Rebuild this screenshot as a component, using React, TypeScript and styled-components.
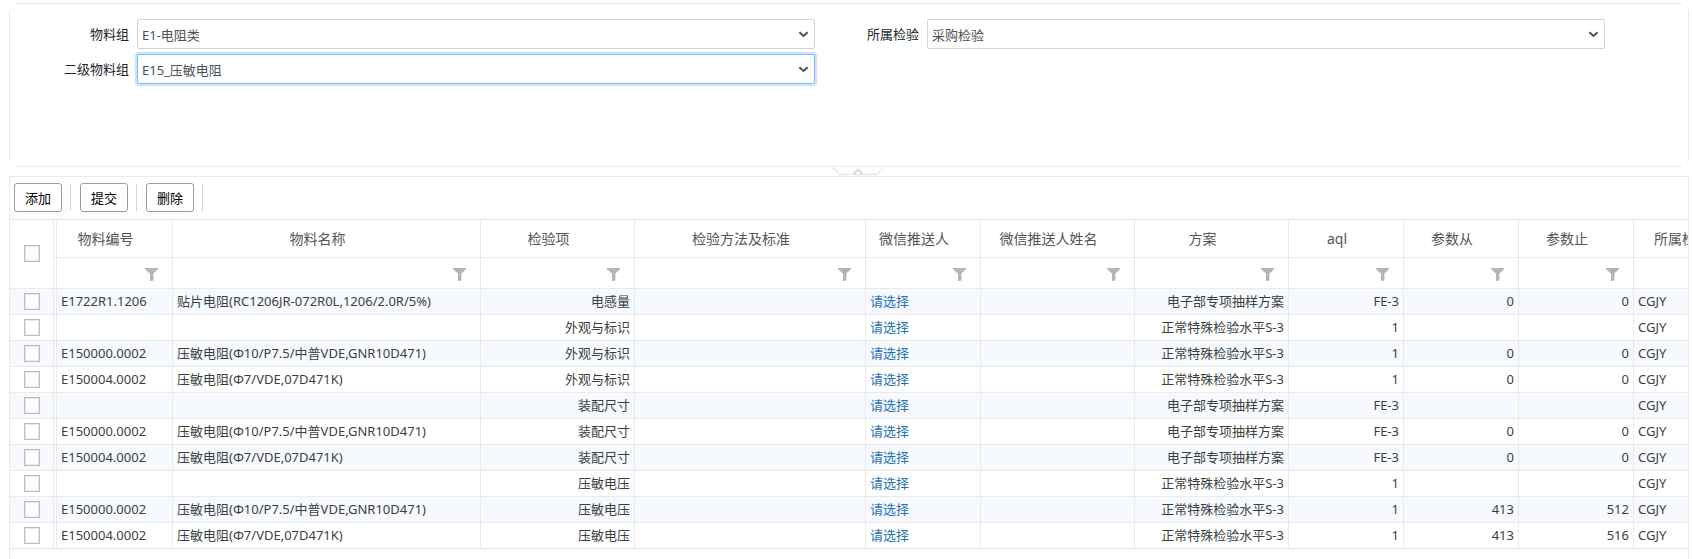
import React, { useState } from "react";
import styled, { createGlobalStyle, css } from "styled-components";

const line = "#ece9ec";

const GlobalStyle = createGlobalStyle`
  *, *::before, *::after { box-sizing: border-box; }
  body {
    margin: 0;
    background: #fff;
    color: #212529;
    font: 13px/20px "Noto Sans", "Noto Sans CJK SC", sans-serif;
  }
`;

const Page = styled.main`
  display: flex;
  flex-direction: column;
  min-height: 100vh;
  padding: 3px 5px 0 9px;
`;

/* Panel outline whose four sides stop short of the corners. */
const FilterPanel = styled.form`
  display: grid;
  grid-template-columns: 1fr 1fr;
  align-content: start;
  row-gap: 5px;
  min-height: 164px;
  padding: 16px 5% 16px 16px;
  background:
    linear-gradient(${line}, ${line}) center top / calc(100% - 14px) 1px no-repeat,
    linear-gradient(${line}, ${line}) center bottom / calc(100% - 14px) 1px no-repeat,
    linear-gradient(${line}, ${line}) left center / 1px calc(100% - 14px) no-repeat,
    linear-gradient(${line}, ${line}) right center / 1px calc(100% - 14px) no-repeat;
`;

const Field = styled.div<{ $newRow?: boolean }>`
  display: flex;
  align-items: center;
  ${(p) => p.$newRow && css`grid-column: 1;`}
`;

const FieldLabel = styled.label`
  width: 112px;
  padding-right: 8px;
  text-align: right;
`;

const SelectBox = styled.div`
  position: relative;
  flex: 1;
  min-width: 0;

  svg {
    position: absolute;
    top: 12px;
    right: 6px;
    pointer-events: none;
  }
`;

const Select = styled.select<{ $active?: boolean }>`
  display: block;
  width: 100%;
  height: 30px;
  padding: 2px 20px 0 4px;
  appearance: none;
  border: 1px solid ${(p) => (p.$active ? "#80bdff" : "#ced4da")};
  border-radius: 2px;
  outline: none;
  background: #fff;
  box-shadow: ${(p) => (p.$active ? "0 0 0 2px #cce5ff" : "none")};
  color: #495057;
  font: inherit;
`;

const Splitter = styled.div`
  display: flex;
  justify-content: center;
  height: 9px;
  padding-left: 18px;
`;

const CollapseButton = styled.button`
  display: block;
  height: 9px;
  padding: 0;
  border: 0;
  background: none;

  svg { display: block; }
`;

const GridPanel = styled.section`
  flex: 1;
  overflow: hidden;
  border: 1px solid ${line};
  border-bottom: 0;
`;

const Toolbar = styled.div`
  display: flex;
  align-items: center;
  gap: 8px;
  padding: 6px 4px 7px;
  border-bottom: 1px solid ${line};
`;

const ToolButton = styled.button`
  height: 29px;
  width: 48px;
  padding: 0;
  border: 1px solid #9c9c9c;
  border-radius: 3px;
  background: #fff;
  color: #000;
  font: inherit;
`;

const Separator = styled.span`
  width: 1px;
  height: 27px;
  margin-right: 1px;
  background: #cdd8d6;
`;

const Table = styled.table`
  width: max-content;
  table-layout: fixed;
  border-collapse: separate;
  border-spacing: 0;
  color: #3c3f42;
`;

const HeadCell = styled.th`
  height: 38px;
  padding: 0 18px 0 0;
  border-right: 1px solid ${line};
  border-bottom: 1px solid ${line};
  color: #555;
  font-size: 14px;
  font-weight: 400;
  white-space: nowrap;
`;

const FilterCell = styled.td`
  height: 31px;
  padding: 2px 14px 0 0;
  border-right: 1px solid ${line};
  border-bottom: 1px solid ${line};
`;

const FilterButton = styled.button`
  display: block;
  margin-left: auto;
  padding: 0;
  border: 0;
  background: none;

  svg { display: block; }
`;

const checkFrame = css`
  padding: 0 0 1px;
  border-right: 1px solid ${line};
  border-bottom: 1px solid ${line};
`;

const CheckHead = styled.th`${checkFrame}`;
const CheckCell = styled.td`${checkFrame}`;

const Gutter = styled.td`${checkFrame}`;

const Checkbox = styled.input.attrs({ type: "checkbox" })`
  display: block;
  width: 16px;
  height: 17px;
  margin: 0 auto;
  appearance: none;
  border: 1px solid #bdbdbd;
  box-shadow: inset 0 0 0 1px #ebe8e8;
  background: #fff;

  &:checked { background: #2a7ab8; }
`;

const Row = styled.tr`
  height: 26px;

  &:nth-child(odd) { background: #f6faff; }
`;

const Cell = styled.td<{ $right?: boolean }>`
  padding: 0 4px 1px;
  border-right: 1px solid ${line};
  border-bottom: 1px solid ${line};
  text-align: ${(p) => (p.$right ? "right" : "left")};
  white-space: nowrap;
`;

const PickLink = styled.a`
  color: #1f72b8;
  text-decoration: none;
`;

type Column = { title: string; width: number; right?: boolean };

const columns: Column[] = [
  { title: "物料编号", width: 116 },
  { title: "物料名称", width: 308 },
  { title: "检验项", width: 154, right: true },
  { title: "检验方法及标准", width: 231 },
  { title: "微信推送人", width: 115 },
  { title: "微信推送人姓名", width: 154 },
  { title: "方案", width: 154, right: true },
  { title: "aql", width: 115, right: true },
  { title: "参数从", width: 115, right: true },
  { title: "参数止", width: 115, right: true },
  { title: "所属检验", width: 115 },
];

const LINK = "请选择";
const special = "电子部专项抽样方案";
const normal = "正常特殊检验水平S-3";
const nameA = "压敏电阻(Φ10/P7.5/中普VDE,GNR10D471)";
const nameB = "压敏电阻(Φ7/VDE,07D471K)";

const rows: string[][] = [
  ["E1722R1.1206", "贴片电阻(RC1206JR-072R0L,1206/2.0R/5%)", "电感量", "", LINK, "", special, "FE-3", "0", "0", "CGJY"],
  ["", "", "外观与标识", "", LINK, "", normal, "1", "", "", "CGJY"],
  ["E150000.0002", nameA, "外观与标识", "", LINK, "", normal, "1", "0", "0", "CGJY"],
  ["E150004.0002", nameB, "外观与标识", "", LINK, "", normal, "1", "0", "0", "CGJY"],
  ["", "", "装配尺寸", "", LINK, "", special, "FE-3", "", "", "CGJY"],
  ["E150000.0002", nameA, "装配尺寸", "", LINK, "", special, "FE-3", "0", "0", "CGJY"],
  ["E150004.0002", nameB, "装配尺寸", "", LINK, "", special, "FE-3", "0", "0", "CGJY"],
  ["", "", "压敏电压", "", LINK, "", normal, "1", "", "", "CGJY"],
  ["E150000.0002", nameA, "压敏电压", "", LINK, "", normal, "1", "413", "512", "CGJY"],
  ["E150004.0002", nameB, "压敏电压", "", LINK, "", normal, "1", "413", "516", "CGJY"],
];

const ChevronDown = () => (
  <svg width="11" height="7" viewBox="0 0 11 7" aria-hidden="true">
    <path d="M1.4 1.2 5.5 5 9.6 1.2" fill="none" stroke="#495057" strokeWidth="2" />
  </svg>
);

const Funnel = () => (
  <svg width="13" height="13" viewBox="0 0 13 13" aria-hidden="true">
    <path d="M0 0H13V1.2L8.4 5.6V12.6L5 13V5.6L0 1.2Z" fill="#b4b4b4" />
  </svg>
);

const CollapseHandle = () => (
  <svg width="54" height="9" viewBox="0 0 54 9" fill="none" aria-hidden="true">
    <path d="M1 0 8.5 7.5H45.5L53 0" stroke="#ebe8eb" strokeWidth="1.4" />
    <path d="M22.5 7 27 2.5 31.5 7" stroke="#d9d6d9" strokeWidth="1.8" />
  </svg>
);

type SelectFieldProps = { id: string; label: string; value: string; active?: boolean; newRow?: boolean };

const SelectField = ({ id, label, value, active, newRow }: SelectFieldProps) => (
  <Field $newRow={newRow}>
    <FieldLabel htmlFor={id}>{label}</FieldLabel>
    <SelectBox>
      <Select id={id} defaultValue={value} $active={active}>
        <option value={value}>{value}</option>
      </Select>
      <ChevronDown />
    </SelectBox>
  </Field>
);

export default function App() {
  const [open, setOpen] = useState(true);
  const [checked, setChecked] = useState<boolean[]>(rows.map(() => false));
  const toggle = (i: number) => setChecked(checked.map((c, n) => (n === i ? !c : c)));

  return (
    <>
      <GlobalStyle />
      <Page>
        {open && (
          <FilterPanel>
            <SelectField id="group" label="物料组" value="E1-电阻类" />
            <SelectField id="inspection" label="所属检验" value="采购检验" />
            <SelectField id="subgroup" label="二级物料组" value="E15_压敏电阻" active newRow />
          </FilterPanel>
        )}
        <Splitter>
          <CollapseButton type="button" aria-label="折叠" onClick={() => setOpen(!open)}>
            <CollapseHandle />
          </CollapseButton>
        </Splitter>
        <GridPanel>
          <Toolbar>
            {["添加", "提交", "删除"].map((name) => (
              <React.Fragment key={name}>
                <ToolButton type="button">{name}</ToolButton>
                <Separator />
              </React.Fragment>
            ))}
          </Toolbar>
          <Table>
            <colgroup>
              <col width={44} />
              <col width={3} />
              {columns.map((c) => (
                <col key={c.title} width={c.width} />
              ))}
            </colgroup>
            <thead>
              <tr>
                <CheckHead rowSpan={2}>
                  <Checkbox
                    aria-label="全选"
                    checked={checked.every(Boolean)}
                    onChange={(e) => setChecked(rows.map(() => e.target.checked))}
                  />
                </CheckHead>
                <Gutter />
                {columns.map((c) => (
                  <HeadCell key={c.title} scope="col">{c.title}</HeadCell>
                ))}
              </tr>
              <tr>
                <Gutter />
                {columns.map((c) => (
                  <FilterCell key={c.title}>
                    <FilterButton type="button" aria-label={`筛选${c.title}`}>
                      <Funnel />
                    </FilterButton>
                  </FilterCell>
                ))}
              </tr>
            </thead>
            <tbody>
              {rows.map((row, i) => (
                <Row key={i}>
                  <CheckCell>
                    <Checkbox aria-label={`选择第${i + 1}行`} checked={checked[i]} onChange={() => toggle(i)} />
                  </CheckCell>
                  <Gutter />
                  {row.map((text, n) => (
                    <Cell key={n} $right={columns[n].right}>
                      {text === LINK ? <PickLink href="#pick">{text}</PickLink> : text}
                    </Cell>
                  ))}
                </Row>
              ))}
            </tbody>
          </Table>
        </GridPanel>
      </Page>
    </>
  );
}
